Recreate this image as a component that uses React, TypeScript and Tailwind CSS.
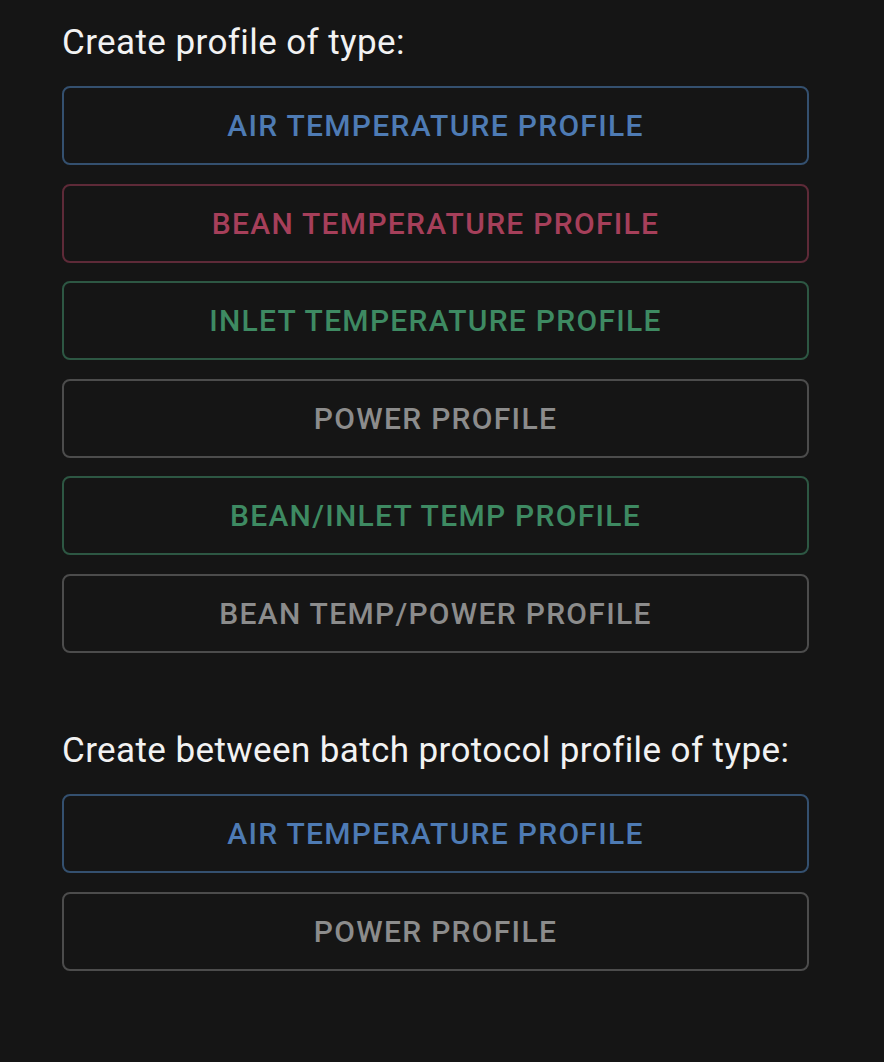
const TONES = {
  blue: 'text-[#4e7bb4] border-[#34506f]',
  red: 'text-[#a63f5a] border-[#5e2a38]',
  green: 'text-[#3e8a62] border-[#2d5743]',
  gray: 'text-[#8c8c8c] border-[#4c4c4c]',
} as const

type Tone = keyof typeof TONES

const MAIN: { label: string; tone: Tone }[] = [
  { label: 'Air temperature profile', tone: 'blue' },
  { label: 'Bean temperature profile', tone: 'red' },
  { label: 'Inlet temperature profile', tone: 'green' },
  { label: 'Power profile', tone: 'gray' },
  { label: 'Bean/inlet temp profile', tone: 'green' },
  { label: 'Bean temp/power profile', tone: 'gray' },
]

const BETWEEN: { label: string; tone: Tone }[] = [
  { label: 'Air temperature profile', tone: 'blue' },
  { label: 'Power profile', tone: 'gray' },
]

function ProfileButton({ label, tone }: { label: string; tone: Tone }) {
  return (
    <button
      className={`h-[79px] w-full rounded-lg border-2 bg-transparent text-[30px] font-medium uppercase tracking-[1.3px] ${TONES[tone]}`}
    >
      {label}
    </button>
  )
}

function Section({ title, items }: { title: string; items: { label: string; tone: Tone }[] }) {
  return (
    <section>
      <h2 className="text-[35px] leading-[48px] tracking-[0.4px] text-[#f2f2f2]">{title}</h2>
      <div className="mt-[19px] flex flex-col gap-[18.6px]">
        {items.map((it, i) => (
          <ProfileButton key={i} {...it} />
        ))}
      </div>
    </section>
  )
}

export default function App() {
  return (
    <div
      className="min-h-[1062px] bg-[#151515] pl-[62px] pr-[75px] pt-[19px]"
      style={{ fontFamily: 'Roboto, "Liberation Sans", sans-serif' }}
    >
      <div className="flex flex-col gap-[74px]">
        <Section title="Create profile of type:" items={MAIN} />
        <Section title="Create between batch protocol profile of type:" items={BETWEEN} />
      </div>
    </div>
  )
}
